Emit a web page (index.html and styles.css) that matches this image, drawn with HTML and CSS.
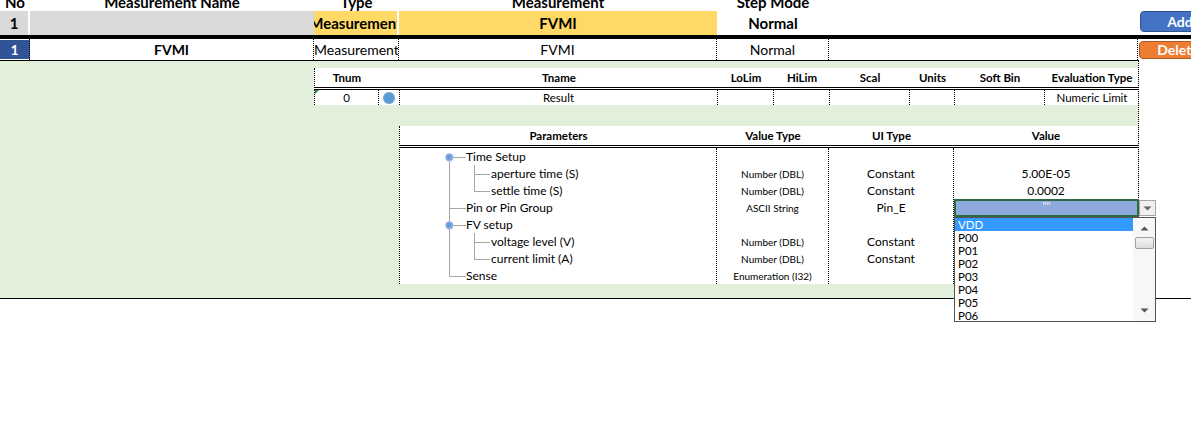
FILE: index.html
```html
<!DOCTYPE html>
<html>
<head>
<meta charset="utf-8">
<title>Measurement sheet</title>
<link rel="stylesheet" href="styles.css">
</head>
<body>
<div class="sheet">
  <div class="grid r0">
    <div class="c"><span>No</span></div>
    <div class="c"><span>Measurement Name</span></div>
    <div class="c"><span>Type</span></div>
    <div class="c"><span>Measurement</span></div>
    <div class="c"><span>Step Mode</span></div>
    <div class="c"></div>
    <div class="c"></div>
  </div>
  <div class="grid r1">
    <div class="c gray gap">1</div>
    <div class="c gray"></div>
    <div class="c yellow gap"><span>Measurement</span></div>
    <div class="c yellow">FVMI</div>
    <div class="c">Normal</div>
    <div class="c"></div>
    <div class="c k"><div class="btn add">Add</div></div>
  </div>
  <div class="thick"></div>
  <div class="grid r2">
    <div class="c num">1</div>
    <div class="c bold">FVMI</div>
    <div class="c left">Measurement</div>
    <div class="c">FVMI</div>
    <div class="c">Normal</div>
    <div class="c"></div>
    <div class="c k nb"><div class="btn del">Delete</div></div>
  </div>
  <div class="green">
    <div class="tnum">
      <div class="trow thead">
        <div>Tnum</div><div></div><div>Tname</div><div>LoLim</div><div>HiLim</div><div>Scal</div><div>Units</div><div>Soft Bin</div><div>Evaluation Type</div>
      </div>
      <div class="trow tdata">
        <div class="tn">0</div>
        <div class="dotcell"><span class="dot"></span></div>
        <div>Result</div><div></div><div></div><div></div><div></div><div></div><div class="nobr">Numeric Limit</div>
      </div>
    </div>
    <div class="params">
      <div class="prow phead">
        <div>Parameters</div><div>Value Type</div><div>UI Type</div><div>Value</div>
      </div>
      <div class="pbody">
        <div class="col tree">
          <svg class="treelines" width="318" height="136" viewBox="0 0 318 136">
            <defs>
              <radialGradient id="bul" cx="0.45" cy="0.45" r="0.6">
                <stop offset="0" stop-color="#5f93d6"/>
                <stop offset="0.6" stop-color="#7fa8dc"/>
                <stop offset="1" stop-color="#c9d8ec"/>
              </radialGradient>
            </defs>
            <g stroke="#a6a6a6" stroke-width="1" fill="none">
              <path d="M49.5 9.5V128.5M49 9.5H66M49 60.5H66M49 77.5H66M49 128.5H66"/>
              <path d="M74.5 17V43.5M74 26.5H90M74 43.5H90"/>
              <path d="M74.5 85V111.5M74 94.5H90M74 111.5H90"/>
            </g>
            <circle cx="49.5" cy="9.5" r="4.2" fill="url(#bul)"/>
            <circle cx="49.5" cy="77.5" r="4.2" fill="url(#bul)"/>
          </svg>
          <div class="ti l1">Time Setup</div>
          <div class="ti l2">aperture time (S)</div>
          <div class="ti l2">settle time (S)</div>
          <div class="ti l1">Pin or Pin Group</div>
          <div class="ti l1">FV setup</div>
          <div class="ti l2">voltage level (V)</div>
          <div class="ti l2">current limit (A)</div>
          <div class="ti l1">Sense</div>
        </div>
        <div class="col vtype">
          <div></div>
          <div>Number (DBL)</div>
          <div>Number (DBL)</div>
          <div>ASCII String</div>
          <div></div>
          <div>Number (DBL)</div>
          <div>Number (DBL)</div>
          <div>Enumeration (I32)</div>
        </div>
        <div class="col uitype">
          <div></div>
          <div>Constant</div>
          <div>Constant</div>
          <div>Pin_E</div>
          <div></div>
          <div>Constant</div>
          <div>Constant</div>
          <div></div>
        </div>
        <div class="col value">
          <div></div>
          <div>5.00E-05</div>
          <div>0.0002</div>
          <div></div>
          <div></div>
          <div></div>
          <div></div>
          <div></div>
        </div>
      </div>
    </div>
  </div>
  <div class="bottomline"></div>

  <div class="dd-cell">""</div>
  <div class="dd-btn">
    <svg width="9" height="5" viewBox="0 0 9 5"><path d="M0.5 0.5H8.5L4.5 4.5Z" fill="#666"/></svg>
  </div>
  <div class="dd-list">
    <div class="dd-items">
      <div class="it sel">VDD</div>
      <div class="it">P00</div>
      <div class="it">P01</div>
      <div class="it">P02</div>
      <div class="it">P03</div>
      <div class="it">P04</div>
      <div class="it">P05</div>
      <div class="it">P06</div>
    </div>
    <div class="dd-scroll">
      <svg class="arr up" width="9" height="5" viewBox="0 0 9 5"><path d="M0.5 4.5H8.5L4.5 0.5Z" fill="#555"/></svg>
      <div class="thumb"></div>
      <svg class="arr down" width="9" height="5" viewBox="0 0 9 5"><path d="M0.5 0.5H8.5L4.5 4.5Z" fill="#555"/></svg>
    </div>
  </div>
</div>
</body>
</html>
```
FILE: styles.css
```css
* { box-sizing: border-box; margin: 0; padding: 0; }
html, body { background: #fff; }
body {
  margin: 0;
  width: 1191px;
  height: 427px;
  overflow: hidden;
  font-family: Lato, "Liberation Sans", sans-serif;
  color: #000;
}
.sheet { position: relative; width: 1191px; }

.grid {
  display: grid;
  grid-template-columns: 30px 284px 85px 318px 112px 309px 53px;
}
.grid .c {
  display: flex;
  align-items: center;
  justify-content: center;
  overflow: hidden;
  white-space: nowrap;
}

/* header labels row (cut off at top, as in the sheet view) */
.r0 { height: 11px; overflow: hidden; }
.r0 .c {
  align-items: flex-end;
  font-weight: 700;
  font-size: 15px;
  line-height: 17px;
}

/* row 1 */
.r1 { height: 24px; }
.r1 .c { font-weight: 700; font-size: 15px; }
.gray { background: #d9d9d9; }
.yellow { background: #ffd966; }
.r1 .gap { border-right: 2px solid #fff; }
.r1 .k { align-items: flex-start; justify-content: flex-start; }

.thick { height: 4px; background: #000; }

/* row 2 */
.r2 { height: 21px; }
.r2 .c {
  font-size: 14px;
  border-right: 1px dotted #000;
}
.r2 .nb { border-right: none; align-items: flex-start; justify-content: flex-start; }
.r2 .bold { font-weight: 700; }
.r2 .left { justify-content: flex-start; }
.r2 .num {
  background: #305496;
  color: #fff;
  font-weight: 700;
  box-shadow: inset 0 1px 0 #fff, inset 0 -1px 0 #fff;
}

.btn {
  flex: none;
  color: #fff;
  font-weight: 700;
  font-size: 14px;
  text-align: center;
  border-radius: 4px;
}
.add {
  margin-left: 2px;
  width: 80px;
  height: 21px;
  line-height: 19px;
  background: #4472c4;
  border: 1px solid #2f528f;
}
.del {
  margin-top: 2px;
  margin-left: 1px;
  width: 78px;
  height: 18px;
  line-height: 16px;
  background: #ed7d31;
  border: 1px solid #ae5a21;
}

/* green body */
.green {
  width: 1139px;
  height: 238px;
  background: #e2efda;
  border-top: 1px solid #000;
  border-right: 1px dotted #000;
  padding-top: 7px;
}
.bottomline { height: 1px; background: #000; width: 1191px; }

/* tnum table */
.tnum { margin-left: 314px; width: 824px; background: #fff; }
.trow {
  display: grid;
  grid-template-columns: 64px 21px 318px 56px 56px 80px 45px 90px 94px;
  border-left: 1px dotted #000;
}
.thead {
  height: 22px;
  border-bottom: 3px double #000;
  font-weight: 700;
  font-size: 11.5px;
}
.trow > div {
  display: flex;
  align-items: center;
  justify-content: center;
  white-space: nowrap;
  overflow: hidden;
}
.tdata { height: 15px; font-size: 11.5px; }
.tdata > div { border-right: 1px dotted #000; }
.tdata > div:last-child { border-right: none; }
.tdata .tn { position: relative; }
.tdata .tn::before {
  content: "";
  position: absolute;
  left: 0;
  top: 0;
  border-top: 4px solid #1e8c3a;
  border-right: 4px solid transparent;
}
.dot {
  flex: none;
  width: 12px;
  height: 12px;
  border-radius: 50%;
  background: radial-gradient(circle at 50% 50%, #5b9bd5 0, #5b9bd5 55%, #7ea9d6 75%, #c8d2dc 100%);
}

/* params table */
.params { margin-left: 399px; width: 739px; margin-top: 21px; background: #fff; border-left: 1px dotted #000; }
.prow, .pbody {
  display: grid;
  grid-template-columns: 317px 112px 125px 184px;
}
.phead {
  height: 22px;
  border-bottom: 3px double #000;
  font-weight: 700;
  font-size: 11.5px;
}
.phead > div {
  display: flex;
  align-items: center;
  justify-content: center;
}
.pbody { height: 136px; }
.col { display: flex; flex-direction: column; }
.col > div {
  height: 17px;
  display: flex;
  align-items: center;
  justify-content: center;
  white-space: nowrap;
}
.tree, .vtype, .uitype { border-right: 1px dotted #000; }
.tree { position: relative; }
.treelines { position: absolute; left: 0; top: 0; }
.col.tree > .ti {
  position: relative;
  justify-content: flex-start;
  font-size: 12px;
}
.ti.l1 { padding-left: 66px; }
.ti.l2 { padding-left: 91px; }
.vtype { font-size: 10px; }
.uitype { font-size: 12px; }
.value { font-size: 12px; }

/* dropdown overlay */
.dd-cell {
  position: absolute;
  left: 954px;
  top: 199px;
  width: 185px;
  height: 18px;
  background: #8ea9db;
  border: 2px solid #2e6b45;
  color: #f2f2f2;
  font-size: 11px;
  line-height: 10px;
  text-align: center;
  z-index: 3;
}
.dd-btn {
  position: absolute;
  left: 1139px;
  top: 200px;
  width: 17px;
  height: 16px;
  background: #f0f0f0;
  border: 1px solid #a6a6a6;
  display: flex;
  align-items: center;
  justify-content: center;
  z-index: 3;
}
.dd-list {
  position: absolute;
  left: 954px;
  top: 217px;
  width: 202px;
  height: 105px;
  background: #fff;
  border: 1px solid #555;
  display: flex;
  z-index: 4;
}
.dd-items { width: 178px; overflow: hidden; }
.it {
  height: 13px;
  line-height: 13px;
  font-size: 11.5px;
  padding-left: 3px;
  white-space: nowrap;
}
.it.sel { background: #3399ff; color: #fff; }
.dd-scroll {
  flex: 1;
  background: #f7f7f7;
  display: flex;
  flex-direction: column;
  align-items: center;
  padding-top: 8px;
}
.arr { display: block; flex: none; }
.thumb {
  margin-top: 6px;
  width: 19px;
  height: 12px;
  border: 1px solid #a0a0a0;
  border-radius: 2px;
  background: linear-gradient(#f4f4f4, #dcdcdc);
}
.arr.down { margin-top: auto; margin-bottom: 8px; }
```
